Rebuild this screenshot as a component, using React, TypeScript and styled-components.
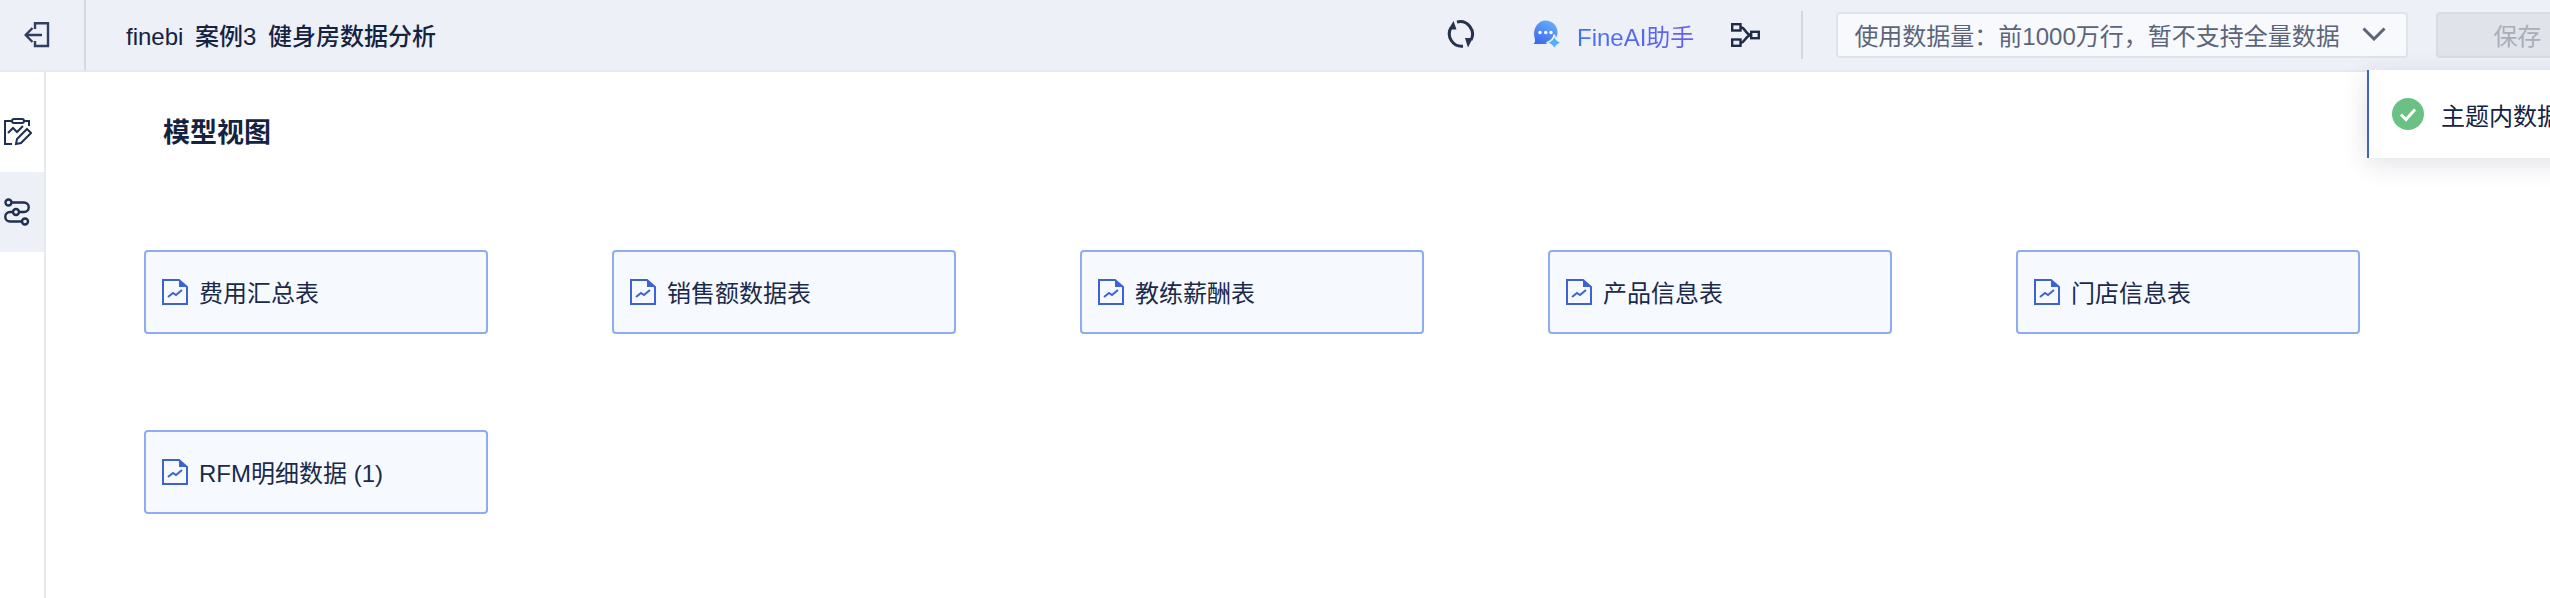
import React from 'react';
import styled, { createGlobalStyle } from 'styled-components';

const GlobalStyle = createGlobalStyle`
  html, body {
    margin: 0;
    padding: 0;
    height: 100%;
    background: #fff;
    overflow: hidden;
  }
  * {
    box-sizing: border-box;
  }
`;

const Page = styled.div`
  position: relative;
  width: 2550px;
  height: 598px;
  overflow: hidden;
  display: flex;
  flex-direction: column;
  font-family: 'Liberation Sans', 'Noto Sans CJK SC', sans-serif;
  color: #152342;
`;

const Header = styled.header`
  flex: 0 0 72px;
  display: flex;
  align-items: flex-start;
  background: #edf0f6;
  border-bottom: 2px solid #e6e8ee;
`;

const BackButton = styled.div`
  flex: 0 0 86px;
  height: 70px;
  display: flex;
  align-items: center;
  justify-content: center;
  border-right: 2px solid #d6d9e0;
  padding-right: 10px;
`;

const ProjectTitle = styled.div`
  flex: 0 0 1360px;
  height: 70px;
  padding: 0 0 2px 40px;
  display: flex;
  align-items: center;
  font-size: 24px;
  font-weight: 500;
  word-spacing: 5px;
  white-space: pre;
`;

const Tools = styled.div`
  flex: 0 0 auto;
  height: 70px;
  display: flex;
  align-items: center;
`;

const RefreshIcon = styled.svg`
  width: 30px;
  height: 30px;
  margin-right: 57px;
`;

const AiLink = styled.div`
  display: flex;
  align-items: center;
  gap: 14px;
  margin-right: 37px;
`;

const AiText = styled.span`
  font-size: 24px;
  background: linear-gradient(90deg, #3f74f4, #6a5cf0);
  -webkit-background-clip: text;
  background-clip: text;
  color: transparent;
`;

const Divider = styled.div`
  width: 2px;
  height: 48px;
  background: #d4d7de;
  margin: 0 33px 0 41px;
`;

const DataSelect = styled.div`
  width: 572px;
  height: 46px;
  padding: 0 20px 2px 16px;
  display: flex;
  align-items: center;
  justify-content: space-between;
  background: #f8f9fd;
  border: 2px solid #e0e3ea;
  border-radius: 4px;
  font-size: 24px;
  color: #5b6579;
  white-space: nowrap;
`;

const SaveButton = styled.div`
  flex: 0 0 162px;
  height: 46px;
  margin-left: 28px;
  padding-bottom: 2px;
  display: flex;
  align-items: center;
  justify-content: center;
  background: #e0e3e9;
  border: 2px solid #d9dce3;
  border-radius: 4px;
  font-size: 24px;
  color: #a9aeb9;
`;

const Body = styled.div`
  flex: 1;
  display: flex;
  min-height: 0;
`;

const Sidebar = styled.aside`
  flex: 0 0 46px;
  padding-top: 20px;
  border-right: 2px solid #e6e8ee;
`;

const SideItem = styled.div<{ $active?: boolean }>`
  height: 80px;
  display: flex;
  align-items: center;
  padding-left: 4px;
  background: ${p => (p.$active ? '#edf0f6' : 'transparent')};
`;

const Main = styled.main`
  flex: 1;
  padding-left: 98px;
`;

const PageTitle = styled.h2`
  margin: 0;
  padding: 42px 0 0 19px;
  height: 178px;
  font-size: 27px;
  line-height: 38px;
  font-weight: 700;
`;

const CardGrid = styled.div`
  display: grid;
  grid-template-columns: repeat(5, 344px);
  column-gap: 124px;
  row-gap: 96px;
`;

const Card = styled.div`
  height: 84px;
  padding-left: 16px;
  display: flex;
  align-items: center;
  gap: 11px;
  background: #f6f9fe;
  border: 2px solid #8dacf2;
  border-radius: 4px;
  font-size: 24px;
  color: #1a2a4a;
`;

const CardLabel = styled.span`
  margin-top: -2px;
`;

const SheetGlyph = styled.svg`
  flex: none;
`;

const Toast = styled.div`
  position: absolute;
  left: 2367px;
  top: 70px;
  width: 400px;
  height: 88px;
  padding-left: 23px;
  display: flex;
  align-items: center;
  gap: 17px;
  background: #fff;
  border-left: 2px solid #3d62d6;
  box-shadow: 0 6px 24px rgba(40, 50, 80, 0.14);
  font-size: 24px;
  white-space: nowrap;
`;

const SheetIcon = () => (
  <SheetGlyph width="26" height="26" viewBox="0 0 26 26" fill="none">
    <path d="M1 1h16l8 7v17H1z" stroke="#3d62d6" strokeWidth="2" />
    <path d="M17 1l8 7h-8z" fill="#3d62d6" />
    <path d="M6 18l5-4 3 2 6-5" stroke="#3d62d6" strokeWidth="2" />
  </SheetGlyph>
);

const tables = ['费用汇总表', '销售额数据表', '教练薪酬表', '产品信息表', '门店信息表', 'RFM明细数据 (1)'];

const App: React.FC = () => {
  return (
    <Page>
      <GlobalStyle />
      <Header>
        <BackButton>
          <svg width="26" height="26" viewBox="0 0 26 26" fill="none" stroke="#2f3f60" strokeWidth="2.4">
            <path d="M11 7V1.200H24V24H11V19" />
            <path d="M2 13H18M8.500 6L1.700 13L8.500 20" />
          </svg>
        </BackButton>
        <ProjectTitle>finebi 案例3 健身房数据分析</ProjectTitle>
        <Tools>
          <RefreshIcon viewBox="0 0 30 30" fill="none">
            <path d="M4.800 8A12.500 12.500 0 0 0 17 26.300" stroke="#27324c" strokeWidth="3" />
            <path d="M11 2A12.500 12.500 0 0 1 25 20" stroke="#27324c" strokeWidth="3" />
            <path d="M7.500 1L2.500 9.500H10.500z" fill="#27324c" />
            <path d="M22 27.500L19 18H26.800z" fill="#27324c" />
          </RefreshIcon>
          <AiLink>
            <svg width="30" height="30" viewBox="0 0 30 30">
              <defs>
                <linearGradient id="bubble" x1="0.800" y1="0" x2="0.200" y2="1">
                  <stop offset="0" stopColor="#66b2f7" />
                  <stop offset="1" stopColor="#3d68ee" />
                </linearGradient>
              </defs>
              <path d="M12.500 0.500C19 0.500 24.500 5.500 24.500 12S19 24 12.500 24H0.500C2 22.500 2.300 21 1.800 18.500C-1 10 4.500 0.500 12.500 0.500z" fill="url(#bubble)" />
              <circle cx="7" cy="12.500" r="1.700" fill="#fff" />
              <circle cx="12.700" cy="12.500" r="1.700" fill="#fff" />
              <circle cx="18" cy="12.500" r="1.700" fill="#fff" />
              <path d="M21.300 14.500C22 19 24 21.500 29 22.700C24 24 22 26.500 21.300 30C20.500 26.500 18.500 24 13.500 22.700C18.500 21.500 20.500 19 21.300 14.500z" fill="#55aef6" stroke="#edf0f6" strokeWidth="1.500" />
            </svg>
            <AiText>FineAI助手</AiText>
          </AiLink>
          <svg width="29" height="24" viewBox="0 0 29 24" fill="none" stroke="#1f2b47" strokeWidth="2.400">
            <rect x="1.200" y="1.200" width="8.300" height="6.300" />
            <rect x="1.200" y="16.500" width="8.300" height="6.300" />
            <rect x="20.200" y="8.800" width="7.600" height="6.400" />
            <path d="M9.500 4.300c5 0 5 7.700 10.700 7.700M9.500 19.700c5 0 5-7.700 10.700-7.700" />
          </svg>
          <Divider />
          <DataSelect>
            使用数据量：前1000万行，暂不支持全量数据
            <svg width="24" height="14" viewBox="0 0 24 14" fill="none" stroke="#5b6579" strokeWidth="3">
              <path d="M1.500 1.500L12 12L22.500 1.500" />
            </svg>
          </DataSelect>
          <SaveButton>保存</SaveButton>
        </Tools>
      </Header>
      <Body>
        <Sidebar>
          <SideItem>
            <svg width="28" height="28" viewBox="0 0 28 28" fill="none" stroke="#1f2f50" strokeWidth="2">
              <path d="M8 3H1v23h7M20 3h5v5" />
              <rect x="8" y="1" width="12" height="4" rx="2" />
              <path d="M4 15l5-5 4 4 6-6" />
              <path d="M23 11l4 4-10 10-5 1 1-5z" />
            </svg>
          </SideItem>
          <SideItem $active>
            <svg width="26" height="28" viewBox="0 0 26 28" fill="none" stroke="#1f2f50" strokeWidth="2.400">
              <circle cx="4.500" cy="4.500" r="3" />
              <circle cx="12" cy="14" r="3" />
              <circle cx="21" cy="23.500" r="3" />
              <path d="M8 4.500h12a4.700 4.700 0 0 1 0 9.500h-5M9 14H6a4.700 4.700 0 0 0 0 9.500h12" />
            </svg>
          </SideItem>
        </Sidebar>
        <Main>
          <PageTitle>模型视图</PageTitle>
          <CardGrid>
            {tables.map(name => (
              <Card key={name}>
                <SheetIcon />
                <CardLabel>{name}</CardLabel>
              </Card>
            ))}
          </CardGrid>
        </Main>
      </Body>
      <Toast>
        <svg width="32" height="32" viewBox="0 0 32 32">
          <circle cx="16" cy="16" r="16" fill="#6bc084" />
          <path d="M9 16.500l5 5 9-10" fill="none" stroke="#fff" strokeWidth="3" />
        </svg>
        主题内数据已更新
      </Toast>
    </Page>
  );
};

export default App;
